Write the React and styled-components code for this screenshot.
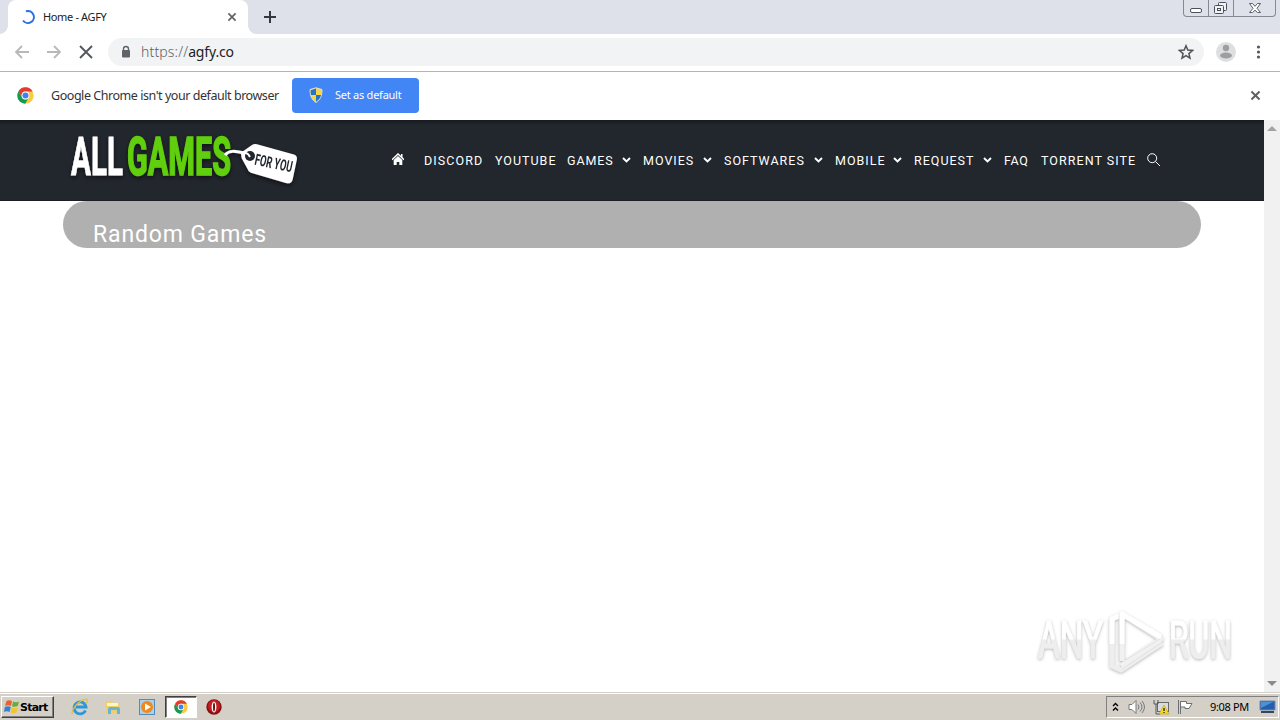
import React from "react";
import styled, { createGlobalStyle, css } from "styled-components";

const Global = createGlobalStyle`
  * { box-sizing: border-box; }
  body { margin: 0; background: #fff; overflow: hidden; }
  svg { display: block; flex: none; }
`;

const uiFont = css`font-family: "Noto Sans", "Open Sans", sans-serif;`;

const Screen = styled.div`
  width: 1280px;
  height: 720px;
  display: flex;
  flex-direction: column;
  background: #fff;
  ${uiFont}
`;

const Label = styled.span`
  font-size: ${(p) => p.$size || 12}px;
  font-weight: ${(p) => p.$weight || 400};
  letter-spacing: ${(p) => p.$spacing || 0}px;
  color: ${(p) => p.$color || "#222"};
  white-space: pre;
  line-height: 16px;
`;

/* Tab strip */
const TabStrip = styled.div`
  height: 34px;
  flex: none;
  display: flex;
  justify-content: space-between;
  background: #dee1e9;
  padding-left: 8px;
`;
const TabGroup = styled.div`display: flex;`;
const Tab = styled.div`
  width: 240px;
  height: 34px;
  padding: 0 12px 0 13px;
  display: flex;
  align-items: center;
  background: #fff;
  border-radius: 8px 8px 0 0;
  position: relative;
  &::before, &::after {
    content: "";
    position: absolute;
    bottom: 0;
    width: 8px;
    height: 8px;
  }
  &::before { left: -8px; background: radial-gradient(circle at 0 0, #dee1e9 7.5px, #fff 8px); }
  &::after { right: -8px; background: radial-gradient(circle at 100% 0, #dee1e9 7.5px, #fff 8px); }
`;
const TabTitle = styled(Label)`flex: 1; margin-left: 8px;`;
const NewTab = styled.div`margin: 11px 0 0 16px;`;
const WindowButtons = styled.div`
  display: flex;
  width: 93px;
  height: 17px;
  margin-right: 4px;
  border: 1px solid #858992;
  border-top: 0;
  border-radius: 0 0 4px 4px;
`;
const WindowButton = styled.div`
  width: ${(p) => p.$w}px;
  display: flex;
  justify-content: center;
  align-items: center;
  border-left: ${(p) => (p.$divided ? "1px solid #858992" : "0")};
`;

/* Toolbar */
const Toolbar = styled.div`
  height: 38px;
  flex: none;
  display: flex;
  align-items: center;
  padding: 0 14px 1px;
  border-bottom: 1px solid #b3b4b6;
`;
const NavButtons = styled.div`display: flex; gap: 16px; width: 94px;`;
const AddressBar = styled.div`
  width: 1096px;
  height: 28px;
  display: flex;
  align-items: center;
  padding: 0 10px 0 12px;
  border-radius: 14px;
  background: #f1f3f4;
`;
const Url = styled.div`flex: 1; margin-left: 9px; display: flex;`;
const ToolbarEnd = styled.div`display: flex; align-items: center; margin-left: 12px; gap: 20px;`;

/* Default-browser bar */
const InfoBar = styled.div`
  height: 48px;
  flex: none;
  display: flex;
  align-items: center;
  padding: 0 20px 1px 17px;
`;
const InfoText = styled(Label)`width: 241px; margin-left: 17px;`;
const DefaultButton = styled.div`
  width: 127px;
  height: 35px;
  display: flex;
  align-items: center;
  padding: 0 0 1px 17px;
  gap: 12px;
  border-radius: 4px;
  background: #4285f4;
  margin-right: auto;
`;

/* Web page */
const Viewport = styled.div`flex: 1; display: flex; min-height: 0; position: relative;`;
const Page = styled.div`width: 1264px;`;
const Header = styled.header`
  height: 81px;
  display: flex;
  padding-left: 60px;
  background: linear-gradient(#171b20, #22262d 5px);
  border-bottom: 1px solid #1b1e24;
`;
const Menu = styled.nav`
  display: flex;
  align-items: center;
  height: 79px;
  margin-left: 86px;
  padding-top: 1px;
`;
const MenuItem = styled.div`
  width: ${(p) => p.$w}px;
  padding-right: 12px;
  display: flex;
  align-items: center;
  justify-content: space-between;
  font-family: Roboto, sans-serif;
  font-size: 12.5px;
  letter-spacing: ${(p) => p.$spacing || 1}px;
  color: #fff;
  white-space: nowrap;
`;
const Banner = styled.div`
  width: 1138px;
  height: 47px;
  margin-left: 63px;
  padding: 20px 0 0 30px;
  border-radius: 24px;
  background: #b0b0b0;
  color: #fff;
  font-family: Roboto, sans-serif;
  font-size: 23px;
  line-height: 28px;
  letter-spacing: 0.85px;
`;
const Scrollbar = styled.div`
  width: 16px;
  display: flex;
  flex-direction: column;
  justify-content: space-between;
  align-items: center;
  padding: 6px 0 6px;
  background: #f1f1f1;
`;
const Watermark = styled.div`
  position: absolute;
  left: 1030px;
  top: 484px;
`;

/* Taskbar */
const Taskbar = styled.div`
  height: 28px;
  flex: none;
  display: flex;
  align-items: center;
  justify-content: space-between;
  padding: 2px 1px 0 1px;
  background: linear-gradient(#d4d0c8 1px, #fff 1px, #fff 2px, #d4d0c8 2px);
`;
const QuickLaunch = styled.div`display: flex; align-items: center;`;
const StartButton = styled.div`
  width: 53px;
  height: 22px;
  margin-right: 9px;
  padding-left: 2px;
  display: flex;
  align-items: center;
  border: 1px solid;
  border-color: #fff #404040 #404040 #fff;
  box-shadow: inset -1px -1px #808080;
  font: bold 11px "DejaVu Sans", sans-serif;
  letter-spacing: -0.75px;
  color: #000;
`;
const LaunchItem = styled.div`
  width: 33.5px;
  height: 22px;
  display: flex;
  justify-content: center;
  align-items: center;
  ${(p) => p.$active && css`
    width: 32px;
    margin: 0 1px;
    background: #fff;
    border: 1px solid;
    border-color: #404040 #fff #fff #404040;
    box-shadow: inset 1px 1px #808080;
  `}
`;
const Tray = styled.div`
  width: 173px;
  height: 22px;
  display: flex;
  align-items: center;
  padding: 0 2px 0 5px;
  border: 1px solid;
  border-color: #808080 #fff #fff #808080;
`;
const TrayIcon = styled.div`width: ${(p) => p.$w}px; display: flex;`;

const Cross = ({ size = 8, width = 2, color = "#5f6368" }) => (
  <svg width={size} height={size} viewBox="0 0 10 10" overflow="visible">
    <path d="M.5.5l9 9M9.5.5l-9 9" stroke={color} strokeWidth={(width * 10) / size} />
  </svg>
);

const Arrow = ({ flip }) => (
  <svg width="16" height="16" viewBox="0 0 16 16" transform={flip ? "scale(-1 1)" : undefined}>
    <path d="M15 8H2M8 2L2 8l6 6" fill="none" stroke="#b6b8ba" strokeWidth="1.8" />
  </svg>
);

const ChromeLogo = ({ size = 17 }) => (
  <svg width={size} height={size} viewBox="0 0 48 48">
    <circle cx="24" cy="24" r="23" fill="#fbca3e" />
    <path d="M4 12.5A23 23 0 0 1 44 12.5L24 13a11 11 0 0 0-10.2 15z" fill="#e33b2e" />
    <path d="M4 12.5A23 23 0 0 0 23 47l10-17a11 11 0 0 1-19-1z" fill="#159a52" />
    <circle cx="24" cy="24" r="11" fill="#fff" />
    <circle cx="24" cy="24" r="8.5" fill="#3f82ee" />
  </svg>
);

const Shield = () => (
  <svg width="14" height="16" viewBox="0 0 14 16">
    <path d="M7 .8l6 1.700C13 9 11.500 12.500 7 15.500 2.500 12.500 1 9 1 2.500z" fill="#f8d548" stroke="#d7dce3" />
    <path d="M7 1.500V8H2C1.700 6 1.600 5 1.700 3.200zM7 8h5c-.5 3-2 5-5 6.700z" fill="#2674c8" />
  </svg>
);

const Chevron = () => (
  <svg width="9" height="6" viewBox="0 0 9 6">
    <path d="M1 1l3.500 3.500L8 1" fill="none" stroke="#fff" strokeWidth="1.9" />
  </svg>
);

const HomeIcon = () => (
  <svg width="12" height="14" viewBox="0 0 12 14">
    <path d="M0 6.800L6 1l6 5.800" fill="none" stroke="#fff" strokeWidth="1.500" />
    <path d="M1.700 7L6 3l4.300 4v5H7.300V9H4.700v3h-3zM9 1h1.500v4L9 3.500z" fill="#fff" />
  </svg>
);

const SiteLogo = () => (
  <svg width="246" height="76" viewBox="0 0 246 76">
    <defs>
      <filter id="glow" x="-10%" y="-20%" width="120%" height="150%">
        <feDropShadow dx="0" dy="2" stdDeviation="2" floodColor="#000" floodOpacity=".55" />
      </filter>
    </defs>
    <g filter="url(#glow)" fontFamily="Roboto, sans-serif" fontWeight="700">
      <g transform="translate(11 55) scale(1 1.52)" fontSize="35">
        <text textLength="52" lengthAdjust="spacingAndGlyphs" fill="#fff" stroke="#fff" strokeWidth=".5">ALL</text>
        <text x="56" textLength="104" lengthAdjust="spacingAndGlyphs" fill="#60cf0a" stroke="#60cf0a" strokeWidth="1">GAMES</text>
      </g>
      <path d="M165 35c4-5 10-4 19-2" fill="none" stroke="#fff" strokeWidth="3" />
      <path d="M182 32l10-7q2-1.500 5-.8l36 10q5 1 3.700 6l-4 19q-1 5-6 4l-34-10q-4-1-5-4l-6-11q-1-3 .3-6.200z" fill="#fff" />
      <circle cx="190" cy="36" r="5" fill="#22262d" />
      <path d="M181 34c5-2 7-1 9 3" fill="none" stroke="#fff" strokeWidth="2" />
      <text transform="translate(194 44.500) rotate(12) scale(1 1.42)" fontSize="11" textLength="38" lengthAdjust="spacingAndGlyphs" fill="#22262d">FOR YOU</text>
    </g>
  </svg>
);

const AnyRun = () => (
  <svg width="220" height="76" viewBox="0 0 220 76">
    <defs>
      <filter id="soft" x="-10%" y="-20%" width="120%" height="140%">
        <feDropShadow dx="0" dy="1" stdDeviation="1.500" floodColor="#666" floodOpacity=".5" />
      </filter>
      <linearGradient id="fade" gradientUnits="userSpaceOnUse" x1="0" y1="-28" x2="0" y2="0">
        <stop offset=".5" stopColor="#fff" />
        <stop offset=".52" stopColor="#eee" />
      </linearGradient>
    </defs>
    <g filter="url(#soft)" fontFamily="Roboto, sans-serif">
      <g transform="translate(0 54) scale(1 1.35)" fontSize="38" fill="url(#fade)" stroke="url(#fade)" strokeWidth=".9">
        <text x="8" textLength="65" lengthAdjust="spacingAndGlyphs">ANY</text>
        <text x="139" textLength="63" lengthAdjust="spacingAndGlyphs">RUN</text>
      </g>
      <g fill="none" strokeWidth="5" strokeLinejoin="round">
        <path d="M82 14v48l9 4 41-27" stroke="#eee" />
        <path d="M92 57V10l39 25-40 27" stroke="#f1f1f1" />
        <path d="M82 40V15l7-3M92 40V10l39 23" stroke="#fff" />
      </g>
      <path d="M94 57l36-22M89 12v46M92 65l39-26" fill="none" stroke="#dedede" strokeWidth=".8" />
    </g>
  </svg>
);

const menu = [
  ["DISCORD", 71, false, 1.1],
  ["YOUTUBE", 72, false, 1],
  ["GAMES", 76, true, 0.9],
  ["MOVIES", 81, true, 1],
  ["SOFTWARES", 111, true, 1],
  ["MOBILE", 79, true, 1],
  ["REQUEST", 90, true, 1],
  ["FAQ", 37, false, 0.7],
  ["TORRENT SITE", 106, false, 1.05],
];

export default function App() {
  return (
    <Screen>
      <Global />
      <TabStrip>
        <TabGroup>
          <Tab>
            <svg width="14" height="14" viewBox="0 0 14 14">
              <path d="M5 1.300A6 6 0 1 1 2 10.500" fill="none" stroke="#2d6fe8" strokeWidth="2" />
            </svg>
            <TabTitle $size={11} $spacing={-0.35}>Home - AGFY</TabTitle>
            <Cross size={8} width={1.7} />
          </Tab>
          <NewTab>
            <svg width="12" height="12" viewBox="0 0 12 12"><path d="M6 0v12M0 6h12" stroke="#34383d" strokeWidth="2" /></svg>
          </NewTab>
        </TabGroup>
        <WindowButtons>
          <WindowButton $w={24}>
            <svg width="12" height="14" viewBox="0 0 12 14"><rect x=".5" y="7.500" width="11" height="4" rx="1.500" fill="#fff" stroke="#4c5059" /></svg>
          </WindowButton>
          <WindowButton $w={25} $divided>
            <svg width="14" height="14" viewBox="0 0 14 14" fill="#f0f2f5" stroke="#4c5059">
              <rect x="4.500" y="1.500" width="8" height="8" rx="1" /><rect x=".5" y="4.500" width="9" height="8" rx="1" /><rect x="3.500" y="7.500" width="3" height="2" />
            </svg>
          </WindowButton>
          <WindowButton $w={42} $divided>
            <svg width="12" height="11" viewBox="0 0 12 11"><path d="M.5.5h3L6 3.300 8.500.5h3L8 5.300l3.500 4.200h-3L6 7.200 3.500 9.500h-3L4 5.300z" fill="#fff" stroke="#4c5059" strokeWidth=".9" /></svg>
          </WindowButton>
        </WindowButtons>
      </TabStrip>

      <Toolbar>
        <NavButtons><Arrow /><Arrow flip /><svg width="16" height="16" viewBox="0 0 16 16"><path d="M2 2l12 12M14 2L2 14" stroke="#54585d" strokeWidth="1.900" /></svg></NavButtons>
        <AddressBar>
          <svg width="12" height="14" viewBox="0 0 12 14"><rect x="2" y="5" width="8" height="7.500" rx="1" fill="#5f6368" /><path d="M3.500 6V4a2.500 2.500 0 0 1 5 0v2" fill="none" stroke="#5f6368" strokeWidth="1.400" /></svg>
          <Url><Label $size={14} $weight={300} $spacing={0.15} $color="#5d6165">https://</Label><Label $size={14} $spacing={-0.15}>agfy.co</Label></Url>
          <svg width="16" height="16" viewBox="0 0 16 16"><path d="M8 1.800l1.800 4.300 4.700.4-3.600 3.100 1.100 4.600L8 11.700l-4 2.500 1.100-4.600L1.500 6.500l4.700-.4z" fill="none" stroke="#505459" strokeWidth="1.500" /></svg>
        </AddressBar>
        <ToolbarEnd>
          <svg width="20" height="20" viewBox="0 0 20 20"><circle cx="10" cy="10" r="10" fill="#dedfe0" /><circle cx="10" cy="6" r="3.200" fill="#9c9ea0" /><ellipse cx="10" cy="13.500" rx="6" ry="3" fill="#9c9ea0" /></svg>
          <svg width="5" height="14" viewBox="0 0 5 14" fill="#54585d"><circle cx="2.500" cy="2" r="1.600" /><circle cx="2.500" cy="7" r="1.600" /><circle cx="2.500" cy="12" r="1.600" /></svg>
        </ToolbarEnd>
      </Toolbar>

      <InfoBar>
        <ChromeLogo />
        <InfoText $size={12.500} $spacing={-0.45} $color="#333">Google Chrome isn't your default browser</InfoText>
        <DefaultButton><Shield /><Label $size={11} $spacing={-0.25} $color="#fff">Set as default</Label></DefaultButton>
        <Cross size={9} width={2} />
      </InfoBar>

      <Viewport>
        <Page>
          <Header>
            <SiteLogo />
            <Menu>
              <MenuItem $w={32}><HomeIcon /></MenuItem>
              {menu.map(([name, w, arrow, spacing]) => (
                <MenuItem key={name} $w={w} $spacing={spacing}><span>{name}</span>{arrow && <Chevron />}</MenuItem>
              ))}
              <svg width="14" height="14" viewBox="0 0 14 14" fill="none" stroke="#fff"><circle cx="5.200" cy="5.200" r="4.500" /><path d="M8.500 8.500L13 13" /></svg>
            </Menu>
          </Header>
          <Banner>Random Games</Banner>
        </Page>
        <Scrollbar>
          <svg width="10" height="5" viewBox="0 0 10 5"><path d="M0 5l5-5 5 5z" fill="#a3a3a3" /></svg>
          <svg width="10" height="5" viewBox="0 0 10 5"><path d="M0 0l5 5 5-5z" fill="#8b8b8b" /></svg>
        </Scrollbar>
        <Watermark><AnyRun /></Watermark>
      </Viewport>

      <Taskbar>
        <QuickLaunch>
          <StartButton>
            <svg width="16" height="16" viewBox="0 0 16 16">
              <path d="M2.500 2Q5 .5 8 2L7 7Q4 5.500 1 7z" fill="#eb602b" /><path d="M9 2.500q3 1.500 6 0L13.800 7q-3 1.500-5.800.3z" fill="#6aac3c" />
              <path d="M.8 8q3-1.500 6 0L5.500 13q-3-1.500-5.500 0z" fill="#3680cf" /><path d="M7.800 8.500q3 1.500 6 0L12.500 13.500q-3 1.500-6 0z" fill="#f5c332" />
            </svg>
            Start
          </StartButton>
          <LaunchItem>
            <svg width="18" height="18" viewBox="0 0 18 18" fill="none"><path d="M14.500 12.500A6 6 0 1 1 15 9H5" stroke="#2997dc" strokeWidth="2.800" /><path d="M2 15C-1 17 3 7 10 3s7-1 5 3" stroke="#e9bd39" strokeWidth="1.300" /></svg>
          </LaunchItem>
          <LaunchItem>
            <svg width="16" height="16" viewBox="0 0 16 16"><path d="M1 2h6l1 2h6v10H1z" fill="#eecf6c" /><path d="M2 4h11v3H2z" fill="#fff5c4" /><path d="M3 15v-5q0-2 2-2h8q2 0 2 2v5h-3v-4H6v4z" fill="#66b4d7" /></svg>
          </LaunchItem>
          <LaunchItem>
            <svg width="16" height="16" viewBox="0 0 16 16"><rect x=".5" y=".5" width="15" height="15" fill="#a9d1ef" stroke="#528bbd" /><circle cx="8" cy="8" r="6" fill="#f18919" /><path d="M6 4.500v7L12 8z" fill="#fff" /></svg>
          </LaunchItem>
          <LaunchItem $active><ChromeLogo size={14} /></LaunchItem>
          <LaunchItem>
            <svg width="16" height="16" viewBox="0 0 16 16"><circle cx="8" cy="8" r="7.700" fill="#8c1114" /><circle cx="8" cy="7" r="6" fill="#c42024" /><ellipse cx="8" cy="8" rx="2.400" ry="5.500" fill="#fff" /><ellipse cx="8" cy="8" rx="1" ry="4.500" fill="#741013" /></svg>
          </LaunchItem>
        </QuickLaunch>
        <Tray>
          <TrayIcon $w={16}><svg width="8" height="10" viewBox="0 0 8 10" fill="none" stroke="#000" strokeWidth="1.400"><path d="M1 4l2.500-2.500L6 4M1 8.500L3.500 6 6 8.500" /></svg></TrayIcon>
          <TrayIcon $w={25}><svg width="17" height="16" viewBox="0 0 17 16" fill="none" stroke="#77797c"><path d="M1 5.500h3l4-4v13l-4-4H1z" fill="#fff" /><path d="M10 5.500q2 2.500 0 5M12 3.500q4 4.500 0 9M14 2q5 6 0 12" /></svg></TrayIcon>
          <TrayIcon $w={24}><svg width="17" height="16" viewBox="0 0 17 16"><rect x="4.500" y="3.500" width="11" height="9" fill="#d9dcde" stroke="#65696c" /><path d="M1 1v4h4V1M3 5v10h4" fill="none" stroke="#54585b" /><path d="M11 6l5 9H6z" fill="#f8da22" stroke="#c39c00" strokeWidth=".6" /><path d="M11 9v3M11 13v1" stroke="#222" strokeWidth="1.300" /></svg></TrayIcon>
          <TrayIcon $w={33}><svg width="17" height="16" viewBox="0 0 17 16"><path d="M1.500 1v14M3.500 2v13M3.500 2.500h6v2h5.500l-3 5H8v-1.500H3.500" fill="#fff" stroke="#6c7074" /></svg></TrayIcon>
          <Label $size={11} $spacing={-0.35} $color="#000">9:08 PM</Label>
          <svg width="17" height="14" viewBox="0 0 17 14" style={{ marginLeft: "auto" }}><path d="M1 1h15v9H1z" fill="#245fae" stroke="#718bb0" /><path d="M2 2h12L2 8z" fill="#4e91d2" /><path d="M2 12h13" stroke="#35465d" strokeWidth="2" /></svg>
        </Tray>
      </Taskbar>
    </Screen>
  );
}
